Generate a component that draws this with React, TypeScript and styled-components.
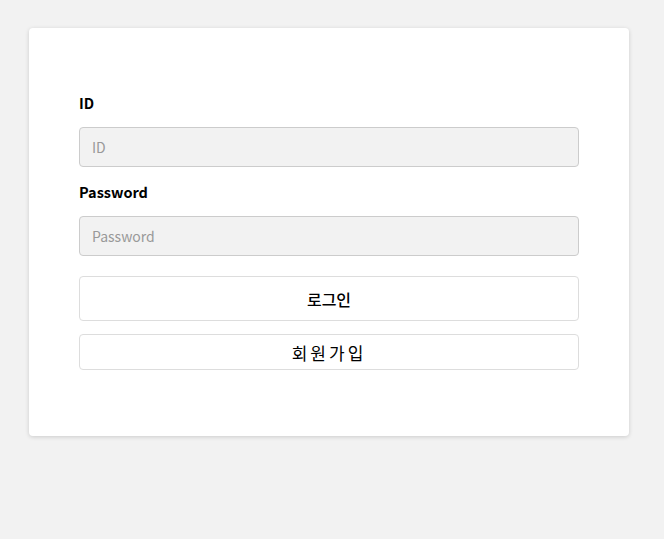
import React from 'react';
import styled, { createGlobalStyle } from 'styled-components';

const GlobalStyle = createGlobalStyle`
  html, body {
    margin: 0;
    padding: 0;
    background: #f2f2f2;
    font-family: 'Noto Sans CJK KR', 'Noto Sans', sans-serif;
  }
`;

export default function App() {
  return (
    <>
      <GlobalStyle />
      <Page>
        <Card>
          <Label htmlFor="id">ID</Label>
          <Input id="id" placeholder="ID" />
          <Label htmlFor="password">Password</Label>
          <Input id="password" type="password" placeholder="Password" />
          <LoginButton type="button">로그인</LoginButton>
          <JoinButton type="button">회원가입</JoinButton>
        </Card>
      </Page>
    </>
  );
}

const Page = styled.div`
  padding: 28px 0 0 29px;
  min-height: 539px;
  box-sizing: border-box;
`;

const Card = styled.div`
  width: 600px;
  box-sizing: border-box;
  padding: 50px 50px 66px;
  display: flex;
  flex-direction: column;
  background: #ffffff;
  border-radius: 4px;
  box-shadow: 0 1px 4px rgba(0, 0, 0, 0.16);
`;

const Label = styled.label`
  display: block;
  margin: 14px 0 13px;
  font-size: 14.5px;
  line-height: 22px;
  font-weight: 700;
  color: #000;
`;

const Input = styled.input`
  height: 40px;
  box-sizing: border-box;
  padding: 0 12px;
  border: 1px solid #cccccc;
  border-radius: 4px;
  background: #f2f2f2;
  font-family: inherit;
  font-size: 14px;
  color: #333;
  outline: none;
  &::placeholder {
    color: #999999;
  }
`;

const Button = styled.button`
  box-sizing: border-box;
  width: 100%;
  border: 1px solid #dddddd;
  border-radius: 4px;
  background: #ffffff;
  font-family: inherit;
  color: #000;
  cursor: pointer;
  padding: 0;
`;

const LoginButton = styled(Button)`
  height: 45px;
  margin-top: 20px;
  font-size: 16px;
  font-weight: 500;
`;

const JoinButton = styled(Button)`
  height: 36px;
  margin-top: 13px;
  font-size: 17px;
  letter-spacing: 3px;
`;
